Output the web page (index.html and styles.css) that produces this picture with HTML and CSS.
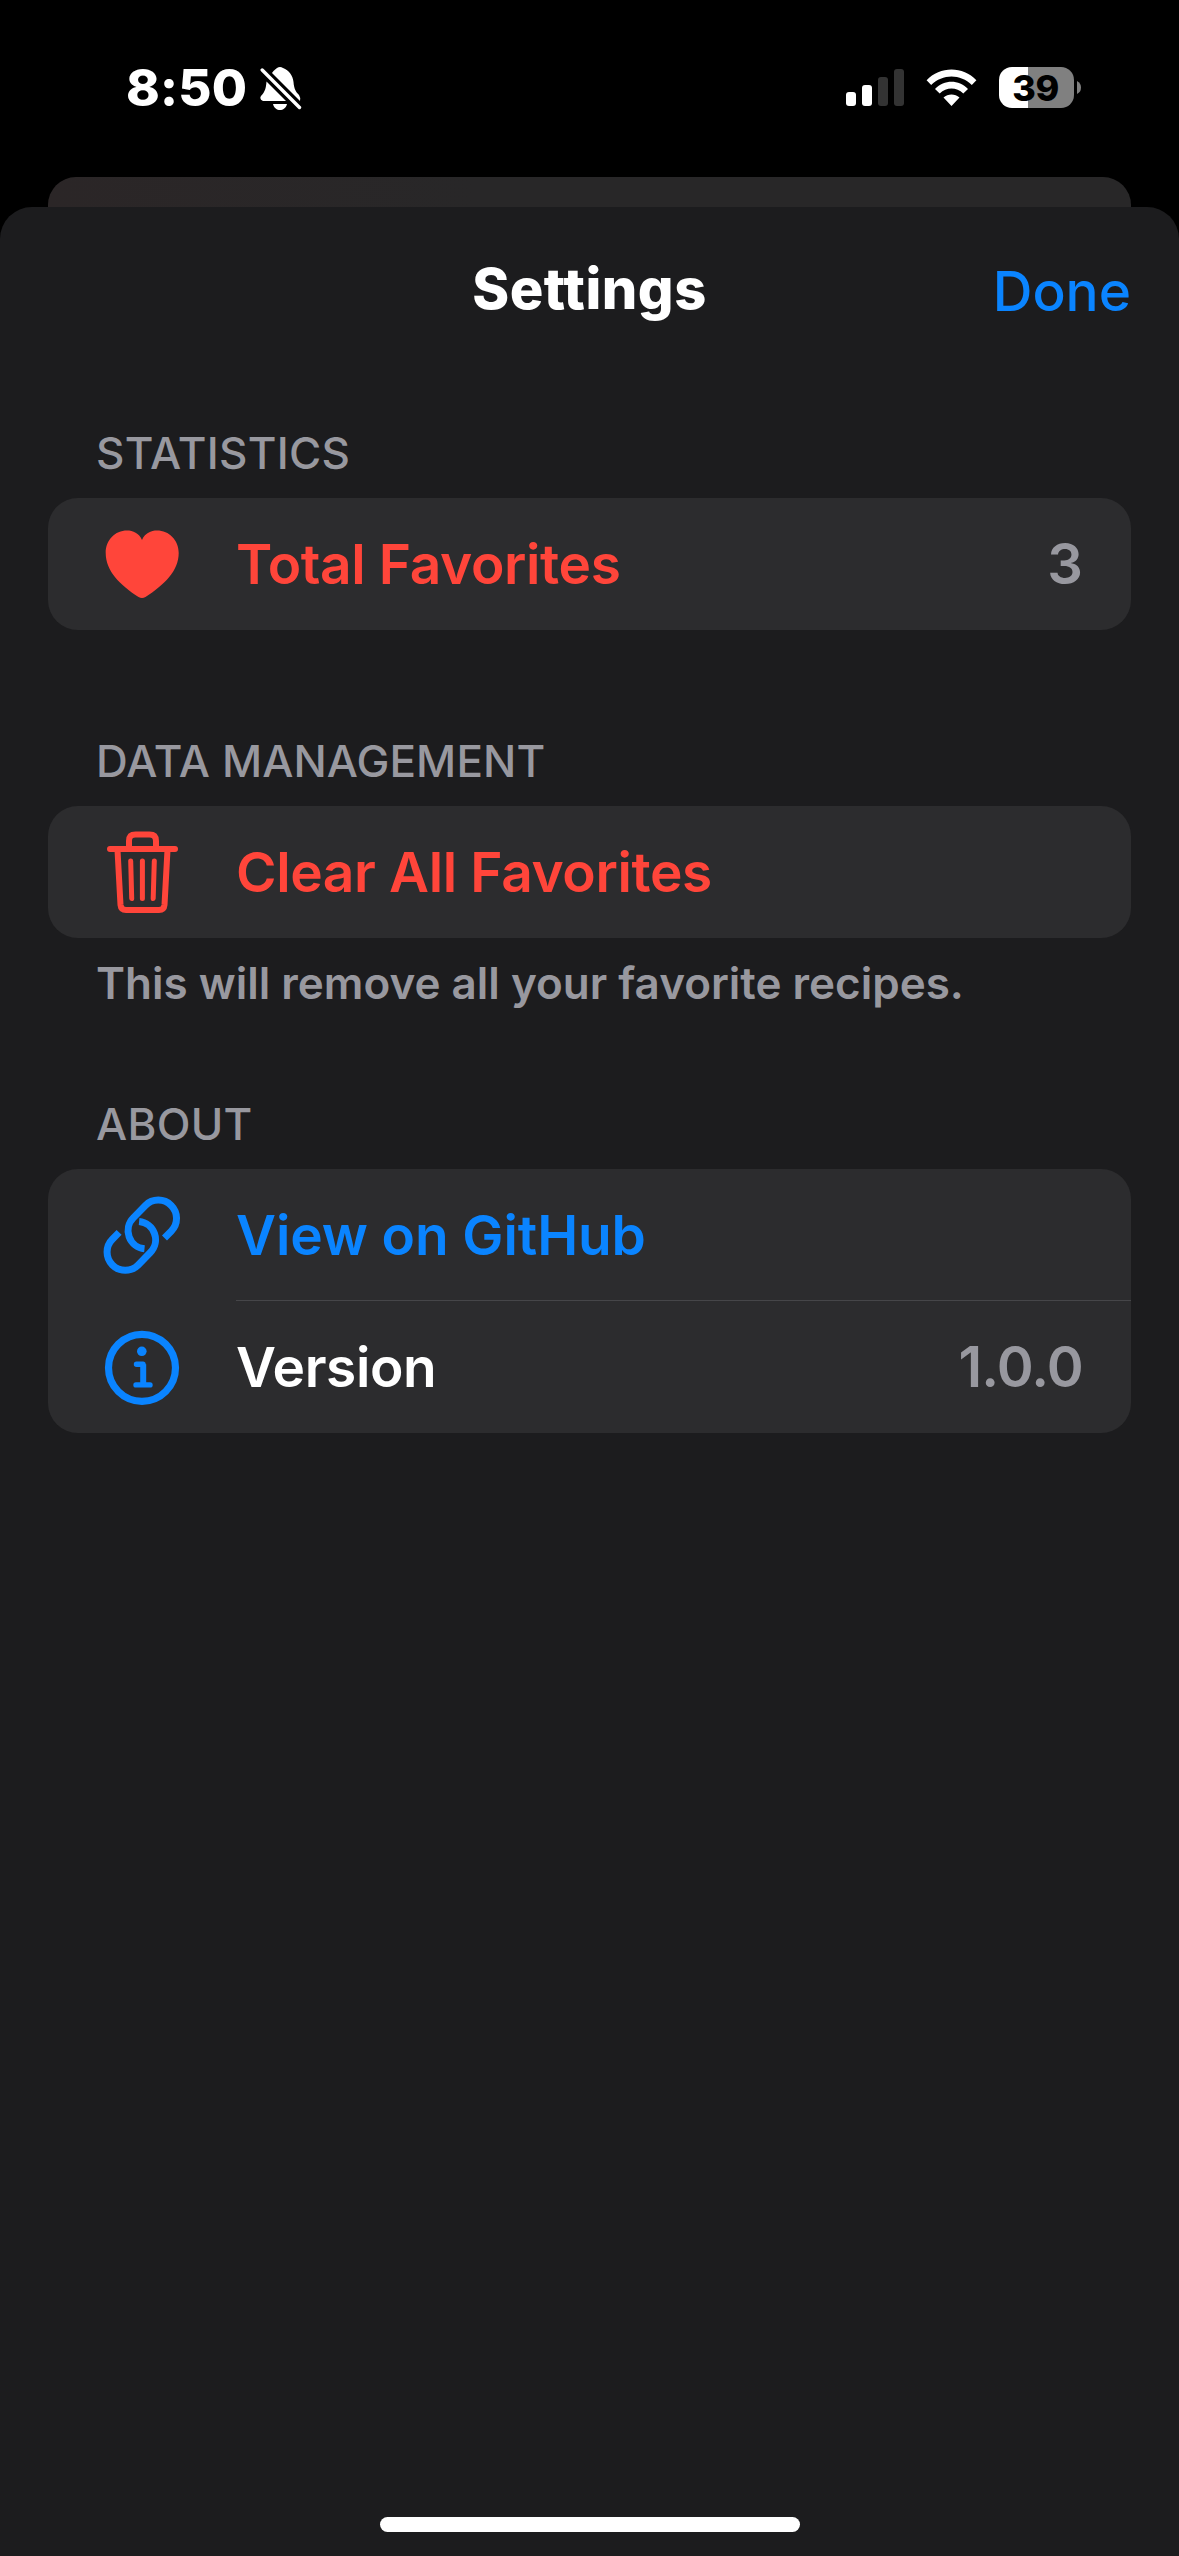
FILE: index.html
```html
<!DOCTYPE html>
<html lang="en">
<head>
<meta charset="utf-8">
<title>Settings</title>
<link rel="stylesheet" href="styles.css">
</head>
<body>
<div class="screen">
  <header class="status">
    <div class="status-left">
      <span class="clock">8:50</span>
      <svg class="bell" viewBox="0 0 42 46" width="42" height="46">
        <path fill="#fff" d="M12 7C14 4 16 3 17 2Q20 0 23 2C29 4 33 10 33.500 16C34 23 36 26 39 29Q41 32 40 35L12 7Z"/>
        <path fill="#fff" d="M6.500 15.500L26 35H3Q-1 33 1 30C5 26 6 22 6.500 15.500ZM13 38H27C26 42 23 44 20 44S14 42 13 38Z"/>
        <path stroke="#fff" stroke-width="3.400" stroke-linecap="round" d="M2.200 4L39.500 41.500"/>
      </svg>
    </div>
    <div class="status-right">
      <div class="signal"><i class="b1"></i><i class="b2"></i><i class="b3"></i><i class="b4"></i></div>
      <svg class="wifi" viewBox="0 0 51 37" width="51" height="37">
        <path fill="#fff" d="M0.600 11.200C14-3.200 37-3.200 50.400 11.200L45.800 16C34.500 4.500 16.500 4.500 5.200 16ZM9 20C18.500 10.300 32.500 10.300 42 20L37.300 24.600C30.500 17.800 20.500 17.800 13.700 24.600ZM17.500 28.600C22 24.500 29 24.500 33.500 28.600L25.500 37Z"/>
      </svg>
      <div class="battery"><span>39</span></div>
      <svg class="nub" viewBox="0 0 4 13" width="4" height="13"><path fill="#808080" d="M0 0Q4 2 4 6.500T0 13Z"/></svg>
    </div>
  </header>
  <div class="behind"></div>
  <main class="sheet">
    <nav class="navbar">
      <h1 class="title">Settings</h1>
      <a class="done">Done</a>
    </nav>

    <h2 class="label l-stat">STATISTICS</h2>
    <section class="card">
      <div class="row red">
        <svg class="icon" viewBox="0 0 84 84"><path fill="currentColor" d="M42 18C45 11 51 8.500 57 8.500C69 8.500 78.700 18 78.700 31C78.700 49 64 63 45.500 75Q42 77 38.500 75C20 63 5.700 49 5.700 31C5.700 18 15 8.500 27 8.500C33 8.500 39 11 42 18Z"/></svg>
        <span class="text">Total Favorites</span>
        <span class="value">3</span>
      </div>
    </section>

    <h2 class="label l-data">DATA MANAGEMENT</h2>
    <section class="card">
      <div class="row red">
        <svg class="icon" viewBox="0 0 84 84" fill="none" stroke="currentColor" stroke-linecap="round" stroke-linejoin="round">
          <path stroke-width="6" d="M10 19H75"/>
          <path stroke-width="6" d="M29 18V11Q29 4.600 35.500 4.600H49.500Q56 4.600 56 11V18M17.500 20L20.500 75Q21 80 26 80H59Q64 80 64.500 75L67.500 20"/>
          <path stroke-width="5" d="M30.700 31L31.700 68.500M42.400 31V68.500M54.300 31L53.200 68.500"/>
        </svg>
        <span class="text">Clear All Favorites</span>
      </div>
    </section>
    <p class="note">This will remove all your favorite recipes.</p>

    <h2 class="label l-about">ABOUT</h2>
    <section class="card">
      <div class="row blue">
        <svg class="icon" viewBox="0 0 84 84" fill="none" stroke="currentColor" stroke-width="7">
          <path d="M64.500 45L71.200 38.200A18.200 18.200 0 0 0 45.400 12.400L33.300 24.900A18.200 18.200 0 0 0 44.500 55.800"/>
          <path d="M19.100 39.400L12.400 46.200A18.200 18.200 0 0 0 38.200 72L50.300 59.500A18.200 18.200 0 0 0 39.100 28.600"/>
        </svg>
        <span class="text t-view">View on GitHub</span>
      </div>
      <div class="row divided">
        <svg class="icon blue" viewBox="0 0 84 84" fill="none" stroke="currentColor" stroke-linecap="round" stroke-linejoin="round">
          <circle cx="42" cy="42.800" r="33.500" stroke-width="7.200"/>
          <circle cx="41.800" cy="26.300" r="4.800" fill="currentColor" stroke="none"/>
          <path stroke-width="5.400" d="M36.500 39.200H43M36 59.900H50"/>
          <path stroke-width="6" stroke-linecap="butt" d="M43.200 39.200V59.900"/>
        </svg>
        <span class="text">Version</span>
        <span class="value t-number">1.0.0</span>
      </div>
    </section>
    <div class="home"></div>
  </main>
</div>
</body>
</html>
```
FILE: styles.css
```css
* { box-sizing: border-box; }
body { margin: 0; background: #000; font-family: Inter, "Liberation Sans", sans-serif; color: #fff; }
.screen { width: 1179px; height: 2556px; display: flex; flex-direction: column; overflow: hidden; }
.status { height: 177px; flex: none; display: flex; justify-content: space-between; align-items: flex-start; padding: 66px 98px 0 126px; }
.status-left { display: flex; gap: 14px; }
.clock { font-size: 51px; line-height: 44px; font-weight: 800; width: 120px; white-space: nowrap; letter-spacing: 0.2px; }
.bell { display: block; }
.status-right { display: flex; padding-top: 1px; }
.signal { display: flex; align-items: flex-end; gap: 6px; height: 39px; margin-right: 22px; }
.signal i { width: 10px; border-radius: 3px; background: #333; }
.signal .b1 { height: 14px; background: #fff; }
.signal .b2 { height: 21px; background: #fff; }
.signal .b3 { height: 29px; }
.signal .b4 { height: 37px; }
.wifi { margin: 2px 22px 0 0; }
.battery { width: 75px; height: 41px; border-radius: 13px; background: linear-gradient(90deg, #fff 29px, #808080 29px); color: #000; font-size: 36px; font-weight: 800; line-height: 42px; text-align: center; letter-spacing: -0.5px; padding-right: 2px; }
.nub { margin: 14px 0 0 3px; }
.behind { flex: none; height: 30px; margin: 0 48px; border-radius: 28px 28px 0 0; background: linear-gradient(90deg, #2b2627, #282728 40%, #282728); }
.sheet { flex: 1; display: flex; flex-direction: column; background: #1c1c1e; border-radius: 32px 32px 0 0; padding: 0 48px; }
.navbar { height: 168px; display: grid; grid-template-columns: 1fr auto 1fr; line-height: 60px; padding-top: 52px; }
.title { grid-column: 2; margin: 0; font-size: 56px; line-height: 60px; font-weight: 800; letter-spacing: 0.5px; }
.done { justify-self: end; color: #0a84ff; font-size: 55px; font-weight: 500; padding-top: 2px; }
.label { margin: 0; padding: 0 0 0 48px; height: 123px; font-size: 44px; font-weight: 500; line-height: 50px; color: #98989f; white-space: nowrap; letter-spacing: 0.3px; }
.l-stat { padding-top: 53px; }
.l-data { height: 176px; padding-top: 106px; letter-spacing: 0.1px; }
.l-about { height: 144px; padding-top: 74px; }
.card { background: #2c2c2e; border-radius: 30px; width: 1083px; }
.row { height: 132px; padding: 0 48px 0 52px; display: flex; align-items: center; position: relative; }
.icon { width: 84px; height: 84px; flex: none; margin-right: 52px; }
.text { font-size: 55px; font-weight: 600; white-space: nowrap; letter-spacing: -0.37px; }
.t-view { letter-spacing: -0.1px; }
.value { margin-left: auto; font-size: 56px; font-weight: 600; color: #98989f; }
.t-number { letter-spacing: -0.8px; }
.red { color: #ff453a; }
.red .value { color: #98989f; }
.blue { color: #0a84ff; }
.divided::before { content: ""; position: absolute; left: 188px; right: 0; top: -1px; height: 1px; background: #464649; }
.note { margin: 0; height: 87px; padding: 20px 0 0 48px; font-size: 44px; line-height: 50px; font-weight: 600; color: #98989f; white-space: nowrap; }
.home { width: 420px; height: 15px; border-radius: 8px; background: #fff; margin: auto auto 24px; }
```
